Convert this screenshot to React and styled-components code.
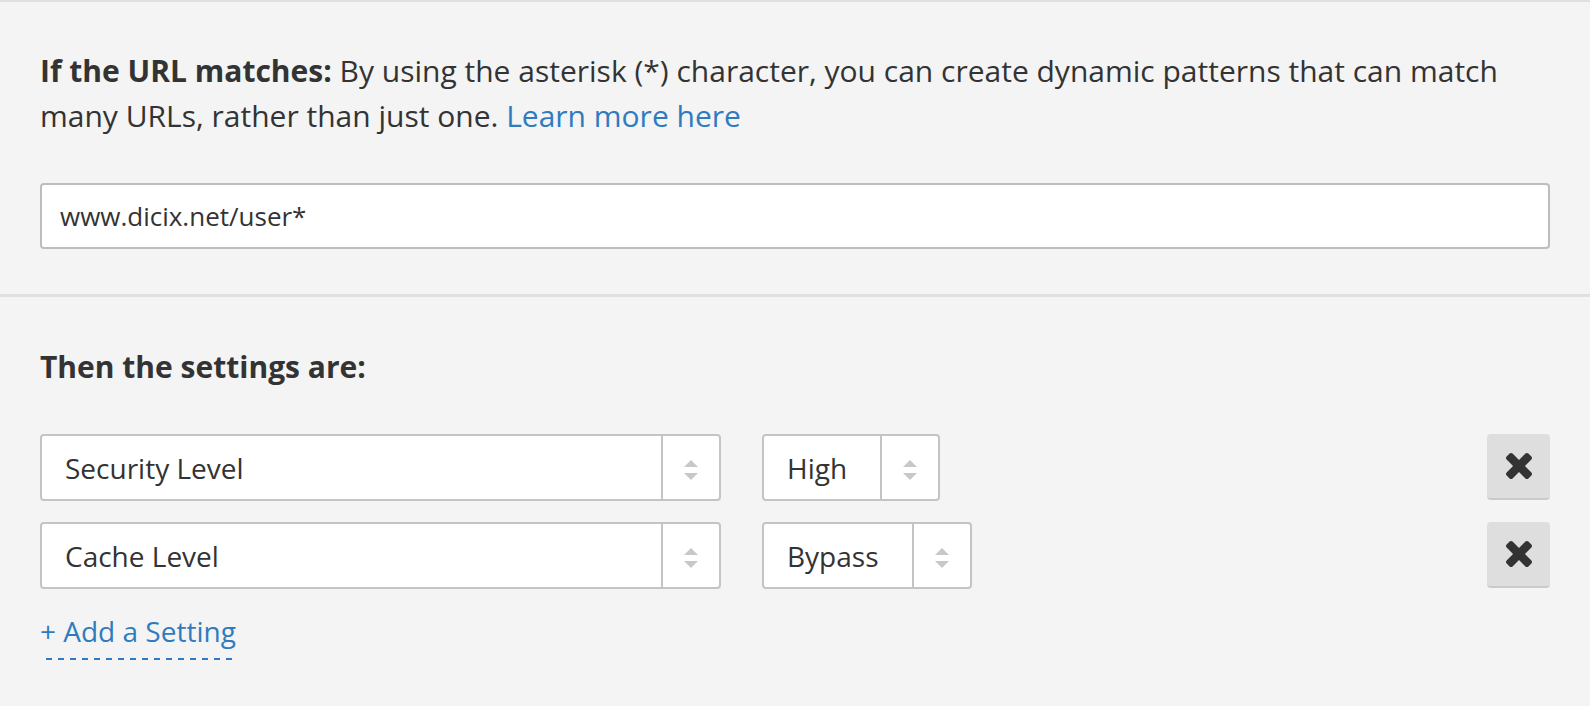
import React, { useState } from 'react';
import styled, { createGlobalStyle } from 'styled-components';

const GlobalStyle = createGlobalStyle`
  html, body {
    margin: 0;
    padding: 0;
    background: #f4f4f4;
  }
  body {
    font-family: "Open Sans", "Liberation Sans", Arial, sans-serif;
    color: #333;
  }
`;

const Page = styled.div`
  background: #f4f4f4;
  border-top: 2px solid #e0e0e0;
`;

const Section = styled.section`
  padding: ${(p) => p.$padding};
  border-top: ${(p) => (p.$divided ? '3px solid #e0e0e0' : 'none')};
`;

const Intro = styled.p`
  margin: 0 0 45px;
  font-size: 30px;
  line-height: 45px;
  color: #333;

  strong {
    font-weight: 700;
  }
`;

const Link = styled.a`
  color: #2f7bbf;
  text-decoration: none;
`;

const UrlInput = styled.input`
  display: block;
  width: 100%;
  height: 66px;
  box-sizing: border-box;
  padding: 0 18px;
  border: 2px solid #bdbdbd;
  border-radius: 4px;
  background: #fff;
  font-family: "Open Sans", "Liberation Sans", Arial, sans-serif;
  font-size: 26px;
  color: #333;
  outline: none;
`;

const Heading = styled.h3`
  margin: 0 0 45px;
  font-size: 30px;
  line-height: 45px;
  font-weight: 700;
  color: #333;
`;

const Rows = styled.div`
  display: flex;
  flex-direction: column;
  gap: 21px;
`;

const Row = styled.div`
  display: flex;
  align-items: flex-start;
`;

const SelectBox = styled.div`
  display: flex;
  box-sizing: border-box;
  width: ${(p) => (p.$width ? `${p.$width}px` : 'auto')};
  height: 67px;
  margin-right: ${(p) => p.$gap || 0}px;
  background: #fff;
  border: 2px solid #c4c4c4;
  border-radius: 4px;
  cursor: pointer;
`;

const SelectLabel = styled.div`
  flex: 1;
  display: flex;
  align-items: center;
  padding: 0 33px 0 23px;
  font-size: 28px;
  color: #333;
  white-space: nowrap;
`;

const ArrowCell = styled.div`
  width: 58px;
  border-left: 2px solid #c4c4c4;
  display: flex;
  flex-direction: column;
  align-items: center;
  justify-content: center;
  gap: 6px;
  padding-top: 4px;
  box-sizing: border-box;
`;

const Triangle = styled.span`
  width: 0;
  height: 0;
  border-left: 7px solid transparent;
  border-right: 7px solid transparent;
  ${(p) => (p.$down ? 'border-top: 7px solid #c8c8c8;' : 'border-bottom: 7px solid #c8c8c8;')}
`;

const RemoveButton = styled.button`
  margin-left: auto;
  width: 63px;
  height: 66px;
  box-sizing: border-box;
  display: flex;
  align-items: center;
  justify-content: center;
  padding: 0;
  background: #dedede;
  border: none;
  border-bottom: 2px solid #cbcbcb;
  border-radius: 4px;
  cursor: pointer;
`;

const AddLink = styled.a`
  display: inline-block;
  margin-top: 21px;
  padding-bottom: 8px;
  font-size: 28px;
  line-height: 42px;
  color: #2f7bbf;
  text-decoration: none;
  background-image: repeating-linear-gradient(to right, #2f7bbf 0 6px, transparent 6px 12px);
  background-size: 100% 2px;
  background-position: 6px bottom;
  background-repeat: no-repeat;
  cursor: pointer;
`;

function TimesIcon() {
  return (
    <svg width="26" height="26" viewBox="302 366 1188 1188" fill="#333">
      <path d="M1490 1322q0 40-28 68l-136 136q-28 28-68 28t-68-28l-294-294-294 294q-28 28-68 28t-68-28l-136-136q-28-28-28-68t28-68l294-294-294-294q-28-28-28-68t28-68l136-136q28-28 68-28t68 28l294 294 294-294q28-28 68-28t68 28l136 136q28 28 28 68t-28 68l-294 294 294 294q28 28 28 68z" />
    </svg>
  );
}

function Select({ value, width, gap }) {
  return (
    <SelectBox $width={width} $gap={gap}>
      <SelectLabel>{value}</SelectLabel>
      <ArrowCell>
        <Triangle />
        <Triangle $down />
      </ArrowCell>
    </SelectBox>
  );
}

function App() {
  const [url, setUrl] = useState('www.dicix.net/user*');
  const [settings, setSettings] = useState([
    { name: 'Security Level', value: 'High' },
    { name: 'Cache Level', value: 'Bypass' },
  ]);

  const remove = (i) => setSettings(settings.filter((_, idx) => idx !== i));

  return (
    <Page>
      <GlobalStyle />
      <Section $padding="46px 40px 45px">
        <Intro>
          <strong>If the URL matches:</strong> By using the asterisk (*) character, you can create dynamic
          patterns that can match many URLs, rather than just one. <Link href="#">Learn more here</Link>
        </Intro>
        <UrlInput value={url} onChange={(e) => setUrl(e.target.value)} />
      </Section>
      <Section $divided $padding="47px 40px 44px">
        <Heading>Then the settings are:</Heading>
        <Rows>
          {settings.map((s, i) => (
            <Row key={s.name}>
              <Select value={s.name} width={681} gap={41} />
              <Select value={s.value} />
              <RemoveButton onClick={() => remove(i)}>
                <TimesIcon />
              </RemoveButton>
            </Row>
          ))}
        </Rows>
        <AddLink>+ Add a Setting</AddLink>
      </Section>
    </Page>
  );
}

export default App;
